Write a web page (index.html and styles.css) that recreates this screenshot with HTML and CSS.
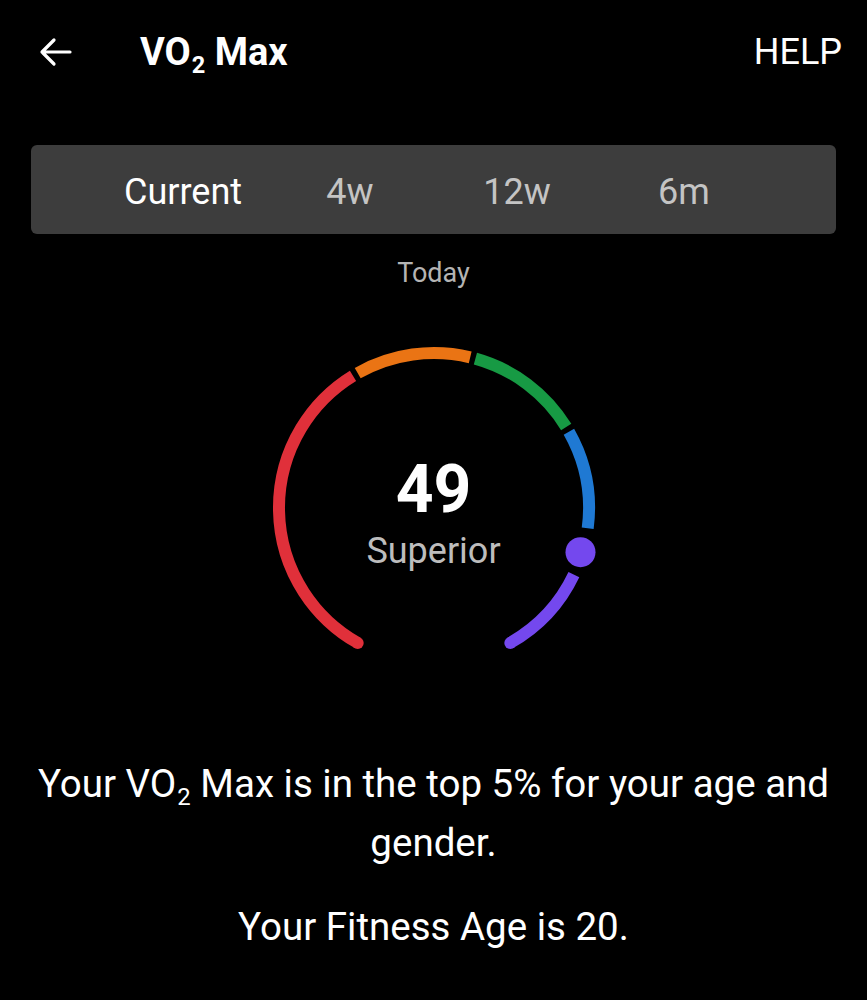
FILE: index.html
```html
<!DOCTYPE html>
<html>
<head>
<meta charset="utf-8">
<link rel="stylesheet" href="styles.css">
</head>
<body>
<div class="screen">
  <header class="topbar">
    <svg class="back" width="34" height="30" viewBox="0 0 34 30">
      <path d="M32 15 H4 M16 3 L4 15 L16 27" fill="none" stroke="#fff" stroke-width="3.2" stroke-linecap="round" stroke-linejoin="round"/>
    </svg>
    <h1 class="title">VO<span class="sub">2</span> Max</h1>
    <span class="help">HELP</span>
  </header>

  <nav class="tabs">
    <span class="tab active">Current</span>
    <span class="tab">4w</span>
    <span class="tab">12w</span>
    <span class="tab">6m</span>
  </nav>

  <div class="today">Today</div>

  <div class="gauge">
    <svg width="340" height="320" viewBox="0 0 340 320">
      <g fill="none" stroke-width="12" stroke-linecap="butt">
        <path d="M93.7 304.9 A155 155 0 0 1 89.0 37.8" stroke="#e0303a"/>
        <path d="M93.7 35.1 A155 155 0 0 1 206.2 19.3" stroke="#ea7414"/>
        <path d="M211.4 20.6 A155 155 0 0 1 302.2 89.0" stroke="#179a44"/>
        <path d="M304.9 93.7 A155 155 0 0 1 323.7 190.2" stroke="#1f79d3"/>
        <path d="M309.9 236.7 A155 155 0 0 1 246.3 304.9" stroke="#7448ee"/>
      </g>
      <circle cx="93.7" cy="304.9" r="6" fill="#e0303a"/>
      <circle cx="246.3" cy="304.9" r="6" fill="#7448ee"/>
      <circle cx="316.5" cy="214.2" r="15" fill="#7448ee"/>
    </svg>
    <div class="reading">
      <div class="value">49</div>
      <div class="level">Superior</div>
    </div>
  </div>

  <p class="msg">Your VO<span class="sub">2</span> Max is in the top 5% for your age and gender.</p>
  <p class="msg second">Your Fitness Age is 20.</p>
</div>
</body>
</html>
```

FILE: styles.css
```css
html, body {
  margin: 0;
  padding: 0;
  background: #000;
}

body {
  font-family: Roboto, "Noto Sans", "Liberation Sans", sans-serif;
  color: #fff;
}

.screen {
  width: 867px;
  height: 1000px;
  overflow: hidden;
}

.topbar {
  height: 104px;
  display: flex;
  align-items: center;
  padding: 0 25px 0 38px;
}

.back {
  display: block;
  flex: none;
}

.title {
  margin: 0 0 0 68px;
  font-size: 38px;
  font-weight: 700;
  flex: 1;
}

.sub {
  font-size: 0.62em;
  position: relative;
  top: 0.32em;
  margin-left: 1px;
}

.help {
  font-size: 36px;
  font-weight: 400;
}

.tabs {
  margin: 41px 31px 0;
  height: 89px;
  background: #3d3d3d;
  border-radius: 6px;
  display: flex;
  justify-content: center;
  align-items: center;
}

.tab {
  width: 167px;
  text-align: center;
  font-size: 36px;
  color: #c4c4c4;
  position: relative;
  top: 2px;
}

.tab.active {
  color: #fff;
}

.today {
  margin-top: 24px;
  text-align: center;
  font-size: 27px;
  line-height: 30px;
  color: #b4b4b4;
}

.gauge {
  position: relative;
  width: 340px;
  height: 320px;
  margin: 50px auto 0;
}

.gauge svg {
  display: block;
}

.reading {
  position: absolute;
  left: 0;
  right: 0;
  top: 116px;
  text-align: center;
}

.value {
  font-size: 66px;
  font-weight: 700;
  line-height: 72px;
  color: #fff;
}

.level {
  font-size: 36px;
  line-height: 44px;
  color: #bdbdbd;
  margin-top: 3px;
}

.msg {
  margin: 99px 26px 0;
  text-align: center;
  font-size: 38.5px;
  line-height: 54px;
}

.msg.second {
  margin-top: 30px;
}
```
